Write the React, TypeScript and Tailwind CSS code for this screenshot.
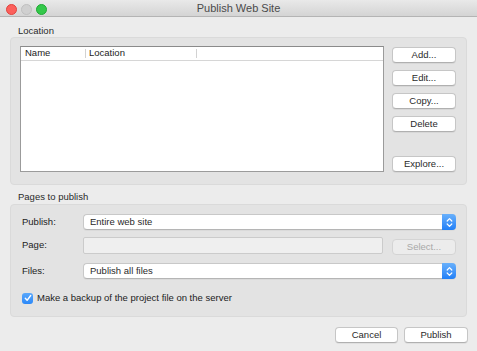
import React from "react";

const font = { fontFamily: '"Liberation Sans", Arial, sans-serif' };

function Btn({ children, disabled, className = "" }: { children: React.ReactNode; disabled?: boolean; className?: string }) {
  return (
    <div
      className={
        "h-[16px] rounded-[4px] border flex items-center justify-center text-[9.5px] leading-none " +
        (disabled
          ? "bg-[#ececec] border-[#d4d4d4] text-[#a8a8a8]"
          : "bg-white border-[#c6c6c6] border-b-[#b0b0b0] text-[#2a2a2a] shadow-[0_1px_0_rgba(0,0,0,0.05)]") +
        " " +
        className
      }
    >
      {children}
    </div>
  );
}

function Stepper() {
  return (
    <div className="w-[14px] h-full rounded-r-[4px] bg-gradient-to-b from-[#68b0fb] to-[#1f7ff7] flex items-center justify-center">
      <svg width="7" height="11" viewBox="0 0 7 11" fill="none" stroke="white" strokeWidth="1.2" strokeLinecap="round" strokeLinejoin="round">
        <path d="M1.2 4 L3.5 1.7 L5.8 4" />
        <path d="M1.2 7 L3.5 9.3 L5.8 7" />
      </svg>
    </div>
  );
}

function Select({ value }: { value: string }) {
  return (
    <div className="flex-1 h-[16px] flex bg-white border border-[#c8c8c8] border-r-0 border-b-[#b5b5b5] rounded-[4px] shadow-[0_1px_0_rgba(0,0,0,0.04)]">
      <div className="flex-1 flex items-center pl-[6px] text-[9.5px] text-[#2a2a2a]">{value}</div>
      <div className="-my-px">
        <Stepper />
      </div>
    </div>
  );
}

export default function App() {
  return (
    <div className="w-[477px] h-[351px] bg-[#ececec] overflow-hidden flex flex-col" style={font}>
      {/* Title bar */}
      <div className="relative h-[17px] shrink-0 bg-gradient-to-b from-[#e9e9e9] to-[#d4d4d4] border-b border-[#b4b4b4] flex items-center pl-[6px] pt-[2px] gap-[4px]">
        <div className="w-[11px] h-[11px] rounded-full bg-[#fc605c] border border-[#e0443e]" />
        <div className="w-[11px] h-[11px] rounded-full bg-[#d0d0d0] border border-[#c0c0c0]" />
        <div className="w-[11px] h-[11px] rounded-full bg-[#34c84a] border border-[#1fa934]" />
        <div className="absolute inset-0 pt-[1px] flex items-center justify-center text-[11px] text-[#4a4a4a] pointer-events-none">
          Publish Web Site
        </div>
      </div>

      <div className="flex flex-col px-[10px]">
        {/* Location group */}
        <div className="pl-[8px] h-[20px] flex items-end pb-[2px] text-[9.5px] leading-none text-[#2a2a2a]">Location</div>
        <div className="h-[148px] rounded-[4px] bg-[#e3e3e3] border border-[#dadada] flex pt-[8px] pl-[9px] pr-[10px] gap-[8px]">
          <div className="w-[364px] h-[126px] bg-white border border-[#9b9b9b] border-t-[#8a8a8a] flex flex-col">
            <div className="h-[14px] border-b border-[#d6d6d6] flex items-center text-[9.5px] text-[#222]">
              <div className="w-[65px] pl-[4px] flex items-center justify-between">
                <span>Name</span>
                <span className="w-px h-[9px] bg-[#d2d2d2]" />
              </div>
              <div className="w-[111px] pl-[3px] flex items-center justify-between">
                <span>Location</span>
                <span className="w-px h-[9px] bg-[#d2d2d2]" />
              </div>
            </div>
          </div>
          <div className="w-[64px] flex flex-col">
            <Btn className="mt-[1px]">Add...</Btn>
            <Btn className="mt-[7px]">Edit...</Btn>
            <Btn className="mt-[7px]">Copy...</Btn>
            <Btn className="mt-[7px]">Delete</Btn>
            <Btn className="mt-[24px]">Explore...</Btn>
          </div>
        </div>

        {/* Pages to publish */}
        <div className="pl-[8px] h-[19px] flex items-end pb-[3px] text-[9.5px] leading-none text-[#2a2a2a]">Pages to publish</div>
        <div className="h-[113px] rounded-[4px] bg-[#e3e3e3] border border-[#dadada] flex flex-col pt-[9px] pl-[11px] pr-[10px]">
          <div className="flex items-center h-[16px]">
            <div className="w-[61px] text-[9.5px] text-[#222]">Publish:</div>
            <Select value="Entire web site" />
          </div>
          <div className="flex items-center h-[17px] mt-[7px] gap-[9px]">
            <div className="w-[52px] text-[9.5px] text-[#222]">Page:</div>
            <div className="flex-1 h-[17px] bg-[#efefef] border border-[#cbcbcb] rounded-[2px]" />
            <Btn disabled className="w-[64px] mt-[2px]">Select...</Btn>
          </div>
          <div className="flex items-center h-[16px] mt-[9px]">
            <div className="w-[61px] text-[9.5px] text-[#222]">Files:</div>
            <Select value="Publish all files" />
          </div>
          <div className="flex items-center mt-[12px] gap-[4px]">
            <div className="w-[11px] h-[11px] rounded-[3px] bg-gradient-to-b from-[#5aa8fb] to-[#2a88f8] flex items-center justify-center">
              <svg width="8" height="8" viewBox="0 0 8 8" fill="none" stroke="white" strokeWidth="1.4" strokeLinecap="round" strokeLinejoin="round">
                <path d="M1.3 4.3 L3.1 6.3 L6.7 1.5" />
              </svg>
            </div>
            <div className="text-[9.5px] text-[#222]">Make a backup of the project file on the server</div>
          </div>
        </div>

        {/* Bottom buttons */}
        <div className="flex justify-end gap-[6px] mt-[10px] mr-[-1px]">
          <Btn className="w-[63px]">Cancel</Btn>
          <Btn className="w-[64px]">Publish</Btn>
        </div>
      </div>
    </div>
  );
}
